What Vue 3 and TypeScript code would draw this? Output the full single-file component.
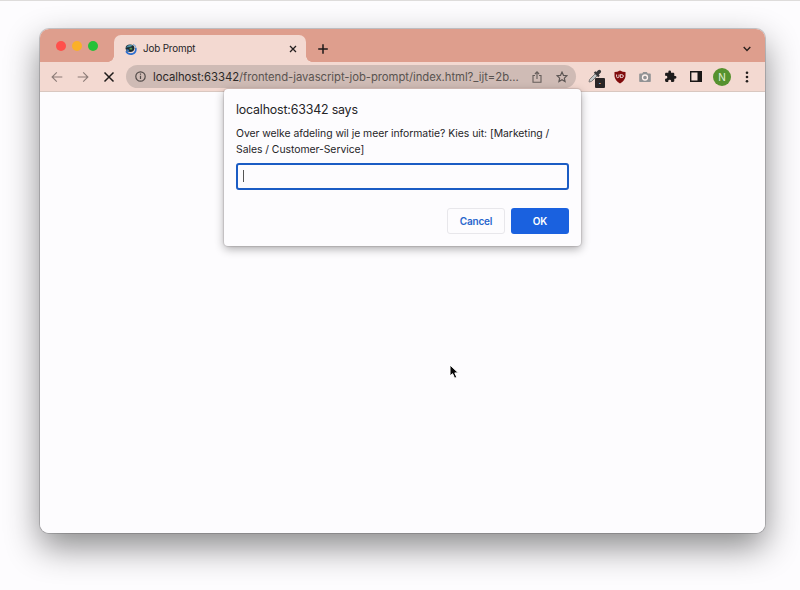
<script setup lang="ts">
import { ref } from 'vue'

const tabTitle = 'Job Prompt'
const address = 'localhost:63342'
const path = '/frontend-javascript-job-prompt/index.html?_ijt=2b...'
const answer = ref('')
</script>

<template>
  <div class="desktop">
    <div class="window">
      <header class="tabbar">
        <div class="lights"><i class="red"></i><i class="yellow"></i><i class="green"></i></div>
        <div class="tab">
          <svg class="favicon" width="12" height="12" viewBox="0 0 12 12">
            <path d="M1 8.2Q3.4 11.8 7.4 10.9 11.4 9.6 10.8 5" fill="none" stroke="#2d6fd0" stroke-width="1.6" />
            <path d="M8 1.2Q10.6 2 11 5" fill="none" stroke="#82acd8" stroke-width="1.1" />
            <ellipse cx="5" cy="5.2" rx="4.4" ry="3.7" fill="#1b2c33" />
            <path d="M.8 4.4Q3.6 .4 8 2.6L5 3.9Z" fill="#4d8fa6" />
            <path d="M1 6.2Q2.2 8.6 4.6 9L3.5 6.6Z" fill="#3b7cc4" />
            <path d="M4.6 4.8h2.6v1.8H4.6z" fill="#5f9a52" />
          </svg>
          <span class="tab-title">{{ tabTitle }}</span>
          <svg class="tab-close" width="8" height="8" viewBox="0 0 8 8"><path d="M1 1l6 6M7 1L1 7" stroke="#252020" stroke-width="1.3" /></svg>
        </div>
        <svg class="plus" width="10" height="10" viewBox="0 0 10 10"><path d="M5 .2v9.6M.2 5h9.6" stroke="#1d1918" stroke-width="1.5" /></svg>
        <svg class="chevron" width="8" height="6" viewBox="0 0 8 6"><path d="M.7 1L4 4.4 7.3 1" fill="none" stroke="#2b201d" stroke-width="1.4" /></svg>
      </header>
      <div class="toolbar">
        <div class="nav">
          <svg width="12" height="12" viewBox="0 0 12 12" class="muted"><path d="M11.3 6H1.2M5.8 1.3L1.1 6l4.7 4.7" /></svg>
          <svg width="12" height="12" viewBox="0 0 12 12" class="muted"><path d="M.7 6h10.1M6.2 1.3L10.9 6l-4.7 4.7" /></svg>
          <svg width="12" height="12" viewBox="0 0 12 12" class="stop"><path d="M1.5 1.5l9 9M10.5 1.5l-9 9" /></svg>
        </div>
        <div class="address">
          <svg width="11" height="11" viewBox="0 0 11 11"><circle cx="5.5" cy="5.5" r="4.7" fill="none" stroke="#514a48" stroke-width="1.2" /><path d="M5.5 4.8v3.3M5.5 2.5v1.2" stroke="#514a48" stroke-width="1.2" /></svg>
          <span class="url"><b>{{ address }}</b>{{ path }}</span>
          <svg class="share" width="10" height="12" viewBox="0 0 10 12"><path d="M3 4.5H1v6.7h8V4.5H7M5 8V1M2.9 3L5 .9 7.1 3" fill="none" stroke="#655d5a" stroke-width="1.1" /></svg>
          <svg class="star" width="12" height="12" viewBox="0 0 24 24"><path d="M12 2.2l2.9 6.5 7.1.7-5.3 4.8 1.5 7-6.2-3.7-6.2 3.7 1.5-7L2 9.4l7.1-.7z" fill="none" stroke="#5c5553" stroke-width="2.3" /></svg>
        </div>
        <div class="extensions">
          <div class="picker">
            <svg width="14" height="14" viewBox="0 0 14 14"><path d="M1 13l.6-2.6L7.6 4.4l2 2-6 6z" fill="#c3c8c9" stroke="#75716f" stroke-width=".9" /><path d="M5.8 3.8l1.5-1.5 1.1.8 1.7-1.9q1.3-1 2.5.1 1.1 1.2.1 2.5L10.8 5.5l.9 1.2-1.5 1.5z" fill="#39393b" /></svg>
            <span class="badge">.</span>
          </div>
          <svg class="shield" width="12" height="14" viewBox="0 0 12 14"><path d="M6 .5Q8.8 2 11.5 2V6.3Q11 10.9 6 13.5 1 10.9.5 6.3V2Q3.2 2 6 .5Z" fill="#800b0c" /><path d="M2.6 4.5v2q0 1.2 1.1 1.2T5 6.5v-2M6.3 4.6h1q2.1 0 2.1 1.5T7.3 7.6h-1z" fill="none" stroke="#f7eeee" stroke-width=".9" /></svg>
          <svg class="camera" width="12" height="12" viewBox="0 0 12 12"><path d="M1 2.4h2.2L4.2.9h3.6l1 1.5H11q.8 0 .8.8v7q0 .8-.8.8H1q-.8 0-.8-.8v-7q0-.8.8-.8Z" fill="#929395" /><circle cx="6" cy="6.5" r="2.5" fill="#929395" stroke="#fff1ed" stroke-width="1.3" /></svg>
          <svg class="puzzle" width="13" height="13" viewBox="0 0 24 24"><path d="M20.5 11H19V7c0-1.1-.9-2-2-2h-4V3.5a2.5 2.5 0 0 0-5 0V5H4C2.9 5 2 5.9 2 7v3.8h1.5a2.7 2.7 0 0 1 0 5.4H2V20c0 1.1.9 2 2 2h3.8v-1.5a2.7 2.7 0 0 1 5.4 0V22H17c1.1 0 2-.9 2-2v-4h1.5a2.5 2.5 0 0 0 0-5Z" fill="#1d1b1b" /></svg>
          <svg class="panel" width="12" height="11" viewBox="0 0 12 11"><path d="M.7.7h10.6v9.6H.7z" fill="#f6ded7" stroke="#191717" stroke-width="1.4" /><path d="M7.5.5h4v10h-4z" fill="#191717" /></svg>
          <span class="avatar">N</span>
          <svg class="menu" width="4" height="12" viewBox="0 0 4 12"><g fill="#221e1d"><circle cx="2" cy="1.8" r="1.3" /><circle cx="2" cy="6" r="1.3" /><circle cx="2" cy="10.2" r="1.3" /></g></svg>
        </div>
      </div>
      <main class="page"></main>
      <section class="dialog" role="dialog">
        <h1>{{ address }} says</h1>
        <p>Over welke afdeling wil je meer informatie? Kies uit: [Marketing /<br />Sales / Customer-Service]</p>
        <div class="field"><span>{{ answer }}</span><i class="caret"></i></div>
        <div class="actions"><button class="cancel">Cancel</button><button class="ok">OK</button></div>
      </section>
    </div>
    <svg class="pointer" width="11" height="16" viewBox="0 0 11 16"><path d="M1 1v11l2.6-2.3 2 4.6 2.2-1-2-4.4h3.6z" fill="#080808" stroke="#fff" stroke-width="1" /></svg>
  </div>
</template>

<style>
body { margin: 0; background: #fdfcfe; }
</style>

<style scoped>
* { box-sizing: border-box; }
svg { display: block; flex: none; }
.desktop { position: relative; width: 800px; height: 590px; padding: 28px 35px 57px 40px; overflow: hidden; background: #fdfcfe; border-top: 1px solid #dedcdb; font-family: Inter, "Liberation Sans", sans-serif; color: #252427; }
.window { position: relative; display: flex; flex-direction: column; width: 725px; height: 504px; border-radius: 9px; background: #fdfcfe; box-shadow: 0 0 0 1px rgba(70,70,75,.26), 0 14px 34px rgba(0,0,0,.46); }
.tabbar { display: flex; height: 33px; flex: none; padding-left: 16px; background: #de9e8d; border-radius: 9px 9px 0 0; }
.lights { display: flex; gap: 6px; width: 58px; padding-top: 12px; }
.lights i { width: 10px; height: 10px; border-radius: 50%; }
.red { background: #ff504b; }.yellow { background: #fab029; }.green { background: #25c138; }
.tab { position: relative; display: flex; align-items: center; width: 192px; height: 27px; margin-top: 6px; padding: 0 9px 0 11px; border-radius: 7px 7px 0 0; background: #f3d9d1; }
.tab::before, .tab::after { content: ""; position: absolute; bottom: 0; width: 6px; height: 6px; }
.tab::before { right: 100%; background: radial-gradient(circle at 0 0, transparent 5.5px, #f3d9d1 6px); }
.tab::after { left: 100%; background: radial-gradient(circle at 100% 0, transparent 5.5px, #f3d9d1 6px); }
.tab-title { margin-left: 6px; padding-bottom: 1px; font-size: 9.8px; letter-spacing: -.13px; }
.tab-close { margin-left: auto; }
.plus { margin: 15px 0 0 12px; }
.chevron { margin: 17px 14px 0 auto; }
.toolbar { display: flex; align-items: center; height: 30px; flex: none; background: #f3d9d1; border-bottom: 1px solid #d9c7c0; }
.nav { display: flex; gap: 14px; width: 86px; padding-left: 11px; }
.nav path { fill: none; stroke-width: 1.1; }.muted { stroke: #8b7b77; }.stop { stroke: #1f1b1a; }
.nav .stop path { stroke-width: 1.5; }
.address { display: flex; align-items: center; width: 450px; height: 23px; padding: 0 8px 0 9px; border-radius: 12px; background: #cfbbb5; }
.url { width: 366px; margin-left: 7px; white-space: nowrap; font-size: 11.3px; letter-spacing: -.045px; color: #595350; }
.url b { font-weight: 400; color: #2c2827; }
.share { margin-left: 13px; }.star { margin-left: auto; }
.extensions { display: flex; align-items: center; width: 189px; padding-left: 12px; }
.picker { position: relative; width: 16px; height: 16px; }
.badge { position: absolute; right: -1px; bottom: -3px; width: 10px; height: 10px; border-radius: 1px; background: #292526; color: #fff; font-size: 8px; line-height: 6px; text-align: center; }
.shield { margin-left: 10px; }.camera { margin-left: 13px; }.puzzle { margin-left: 13px; }.panel { margin-left: 13px; }
.avatar { display: grid; place-items: center; width: 18px; height: 18px; margin-left: 11px; border-radius: 50%; background: #56922f; color: #e3efd8; font-size: 10px; }
.menu { margin-left: 14px; }
.page { flex: 1; background: #fdfcfe; border-radius: 0 0 9px 9px; }
.dialog { position: absolute; top: 60px; left: 184px; width: 357px; height: 157px; padding: 12px 12px 12px; border-radius: 4px; background: #fdfcfe; box-shadow: 0 0 1px 1px rgba(65,55,55,.15), 0 3px 10px rgba(0,0,0,.32); }
h1 { height: 17px; margin: 0; font-size: 12.4px; line-height: 17px; font-weight: 400; letter-spacing: -.18px; white-space: nowrap; }
p { height: 32px; margin: 8px 0 5px; font-size: 10.4px; line-height: 16px; letter-spacing: -.035px; white-space: nowrap; }
.field { display: flex; align-items: center; height: 27px; padding-left: 5px; border: 2px solid #1b5cc4; border-radius: 3px; }
.caret { width: 1px; height: 12px; margin-top: -2px; background: #555; }
.actions { display: flex; justify-content: flex-end; gap: 6px; margin-top: 18px; }
button { width: 58px; height: 26px; padding: 0; border-radius: 3px; font: 600 10px Inter, sans-serif; letter-spacing: -.16px; }
.cancel { border: 1px solid #e8e7eb; background: #fdfcfe; color: #2866cc; }
.ok { border: 0; background: #1a61df; color: #fff; }
.pointer { position: absolute; left: 449px; top: 363px; }
</style>
